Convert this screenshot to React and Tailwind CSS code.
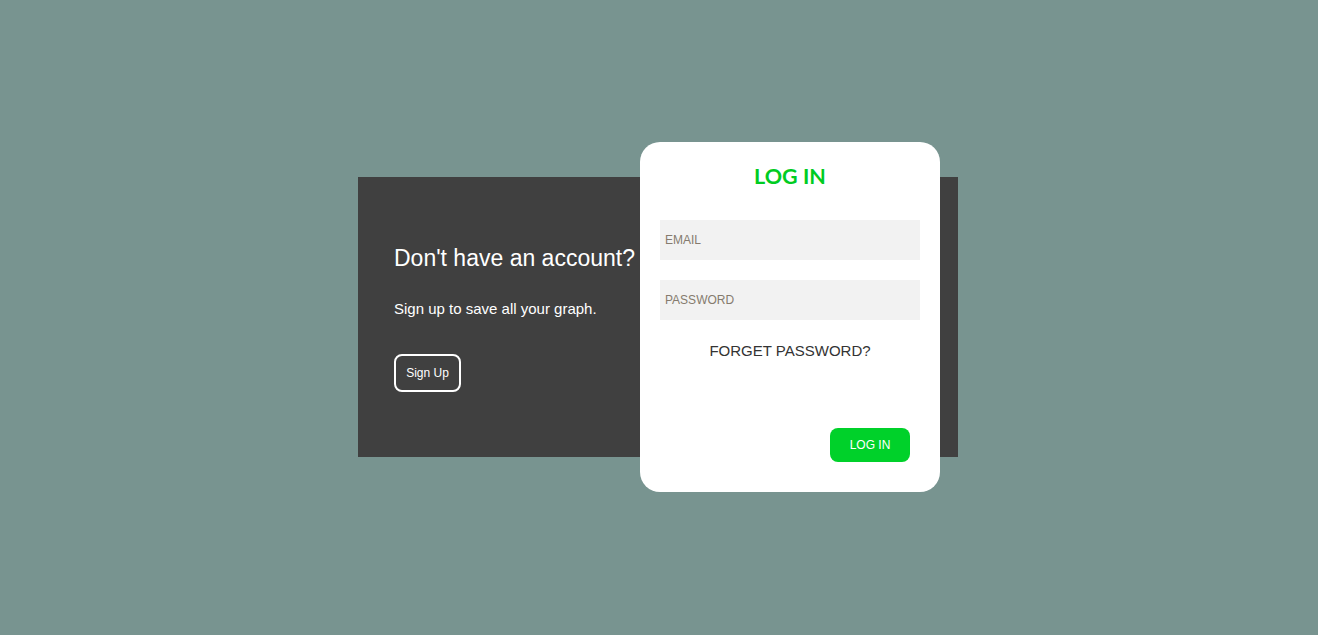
export default function App() {
  return (
    <div className="w-full h-[635px] bg-[#789490] pl-[358px] pt-[177px]">
      <div className="relative w-[600px] h-[280px] bg-[#404040] font-['Liberation_Sans',Arial,sans-serif]">
        <div className="pl-[36px] pt-[66px] text-white">
          <h2 className="text-[23px] leading-[30px]">Don't have an account?</h2>
          <p className="mt-[27px] text-[15px] leading-[18px]">Sign up to save all your graph.</p>
          <button className="mt-[36px] w-[67px] h-[38px] border-2 border-white rounded-[8px] text-[12px] text-white">Sign Up</button>
        </div>
        <div className="absolute left-[282px] top-[-35px] w-[300px] h-[350px] bg-white rounded-[20px] px-[20px] flex flex-col">
          <h1 className="mt-[21px] text-center text-[21.5px] leading-[26px] font-bold text-[#00cc22] font-['Lato',sans-serif]">LOG IN</h1>
          <input className="mt-[31px] h-[40px] w-[260px] bg-[#f2f2f2] px-[5px] text-[12px] outline-none placeholder:text-[#857b6e]" placeholder="EMAIL" />
          <input className="mt-[20px] h-[40px] w-[260px] bg-[#f2f2f2] px-[5px] text-[12px] outline-none placeholder:text-[#857b6e]" placeholder="PASSWORD" />
          <div className="mt-[22px] text-center text-[15px] leading-[18px] text-[#333333]">FORGET PASSWORD?</div>
          <div className="mt-[68px] flex justify-end pr-[10px]">
            <button className="w-[80px] h-[34px] rounded-[8px] bg-[#00d12a] text-white text-[12px]">LOG IN</button>
          </div>
        </div>
      </div>
    </div>
  );
}
